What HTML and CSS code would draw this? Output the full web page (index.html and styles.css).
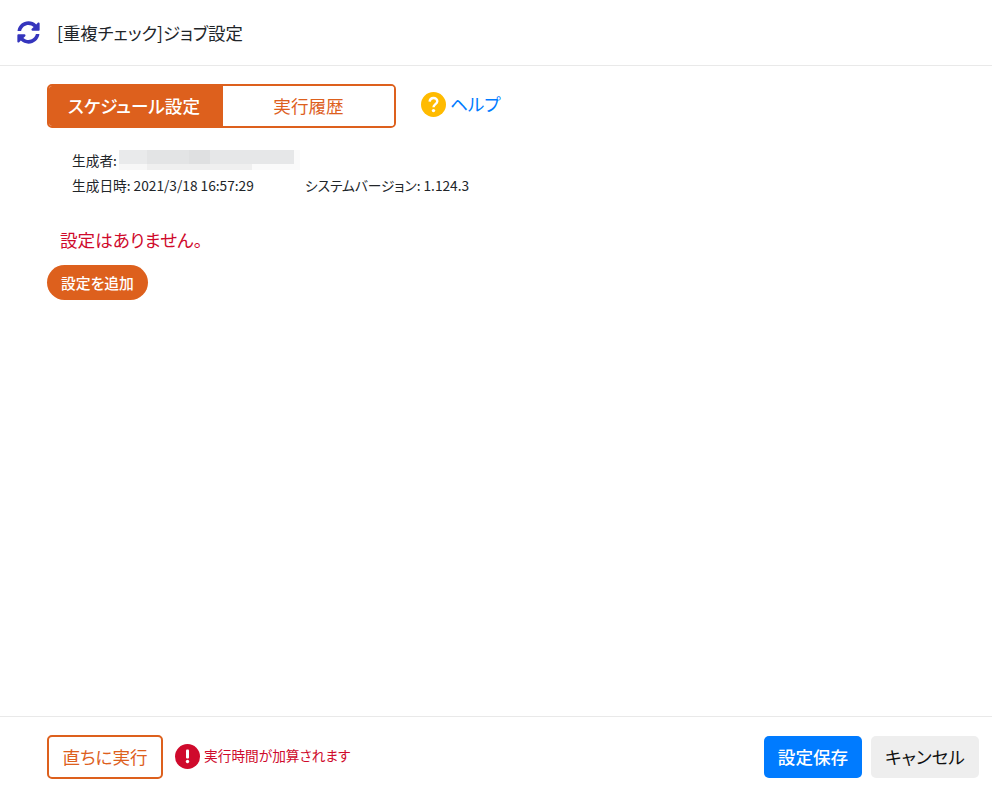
FILE: index.html
```html
<!DOCTYPE html>
<html lang="ja">
<head>
  <meta charset="UTF-8">
  <meta name="viewport" content="width=device-width, initial-scale=1.0">
  <title>[重複チェック]ジョブ設定</title>
  <link rel="stylesheet" href="styles.css">
</head>
<body>

  <header class="title-bar">
    <svg class="title-icon" viewBox="0 0 512 512"><path d="M370.72 133.28C339.458 104.008 298.888 87.962 255.848 88c-77.458.068-144.328 53.178-162.791 126.85-1.344 5.363-6.122 9.15-11.651 9.15H24.103c-7.498 0-13.194-6.807-11.807-14.176C33.933 94.924 134.813 8 256 8c66.448 0 126.791 26.136 171.315 68.685L463.03 40.97C478.149 25.851 504 36.559 504 57.941V192c0 13.255-10.745 24-24 24H345.941c-21.382 0-32.09-25.851-16.971-40.971l41.75-41.749zM32 296h134.059c21.382 0 32.09 25.851 16.971 40.971l-41.75 41.75c31.262 29.273 71.835 45.319 114.876 45.28 77.418-.07 144.315-53.144 162.787-126.849 1.344-5.363 6.122-9.15 11.651-9.15h57.304c7.498 0 13.194 6.807 11.807 14.176C478.067 417.076 377.187 504 256 504c-66.448 0-126.791-26.136-171.315-68.685L48.97 471.03C33.851 486.149 8 475.441 8 454.059V320c0-13.255 10.745-24 24-24z"/></svg>
    <h1>[重複チェック]ジョブ設定</h1>
  </header>

  <main class="content">
    <div class="tab-row">
      <div class="tabs">
        <button class="tab tab-active">スケジュール設定</button>
        <button class="tab">実行履歴</button>
      </div>
      <a class="help" href="#">
        <svg class="help-icon" viewBox="0 0 25 25">
          <circle cx="12.5" cy="12.5" r="12.5" fill="#ffbb00"/>
          <path d="M8.6 9.6c.2-2.2 1.8-3.6 3.9-3.6 2.2 0 3.8 1.4 3.8 3.2 0 2.8-3.8 3-3.8 6" fill="none" stroke="white" stroke-width="2.4"/>
          <circle cx="12.5" cy="18.6" r="1.7" fill="white"/>
        </svg>
        <span class="help-label">ヘルプ</span>
      </a>
    </div>

    <div class="info">
      <div class="info-row">
        <span>生成者:</span>
        <div class="blur-name">
          <div class="blur-top"></div>
          <div class="blur-bottom"></div>
        </div>
      </div>
      <div class="info-row">
        <span class="info-date">生成日時: 2021/3/18 16:57:29</span>
        <span>システムバージョン: 1.124.3</span>
      </div>
    </div>

    <p class="no-settings">設定はありません。</p>
    <button class="add-btn">設定を追加</button>
  </main>

  <footer class="bottom-bar">
    <button class="run-btn">直ちに実行</button>
    <svg class="warn-icon" viewBox="0 0 25 25">
      <circle cx="12.5" cy="12.5" r="12.5" fill="#cf0a2c"/>
      <rect x="11" y="5.5" width="3" height="9" rx="1" fill="white"/>
      <circle cx="12.5" cy="17.5" r="1.7" fill="white"/>
    </svg>
    <span class="warn-text">実行時間が加算されます</span>
    <button class="save-btn">設定保存</button>
    <button class="cancel-btn">キャンセル</button>
  </footer>

</body>
</html>
```

FILE: styles.css
```css
html, body {
  height: 100%;
}

body {
  font-family: 'Noto Sans CJK JP', 'Noto Sans', sans-serif;
  font-feature-settings: 'palt';
  margin: 0;
  display: flex;
  flex-direction: column;
  background-color: white;
  color: #212529;
}

button {
  font-family: inherit;
  font-feature-settings: inherit;
  cursor: pointer;
  padding: 0;
}

.title-bar {
  display: flex;
  align-items: center;
  height: 65px;
  padding-left: 17px;
  border-bottom: 1px solid #e9e9e9;
}

.title-icon {
  width: 23px;
  height: 23px;
  fill: #3535bd;
  margin-right: 17px;
  margin-top: -1px;
}

h1 {
  font-size: 17.4px;
  font-weight: 400;
  margin: 0;
}

.content {
  flex: 1;
  padding: 18px 47px 0;
}

.tab-row {
  display: flex;
  align-items: center;
}

.tabs {
  display: flex;
  width: 349px;
  height: 44px;
  border: 2px solid #dd601d;
  border-radius: 5px;
  box-sizing: border-box;
  overflow: hidden;
}

.tab {
  flex: 1;
  border: none;
  padding-bottom: 2px;
  background-color: white;
  color: #dd601d;
  font-size: 17.6px;
}

.tab-active {
  flex: 0 0 174px;
  padding-right: 4px;
  background-color: #dd601d;
  color: white;
  font-weight: 500;
}

.help {
  display: flex;
  align-items: center;
  margin-left: 25px;
  font-size: 17.6px;
  color: #007bff;
  text-decoration: none;
  gap: 4px;
  position: relative;
  top: -2px;
}

.help-icon {
  width: 25px;
  height: 25px;
}

.help-label {
  margin-top: -2px;
}

.info {
  padding: 19px 0 0 25px;
  font-size: 13.7px;
}

.info-row {
  display: flex;
  align-items: center;
  height: 25px;
}

.info-date {
  width: 233px;
}

.blur-name {
  width: 181px;
  height: 20px;
  margin-left: 2px;
  background-color: #fafafa;
}

.blur-top {
  width: 175px;
  height: 14px;
  background: linear-gradient(90deg, #e9eaeb 0 28px, #e3e4e5 28px 70px, #dfe0e1 70px 91px, #e6e7e8 91px 175px);
}

.blur-bottom {
  width: 133px;
  height: 6px;
  background: linear-gradient(90deg, #f7f7f7 0 28px, #efefef 28px 133px);
}

.no-settings {
  margin: 31px 0 0 13px;
  font-size: 17.6px;
  line-height: 24px;
  color: #cf0a2c;
}

.add-btn {
  display: block;
  margin-top: 13px;
  width: 101px;
  height: 35px;
  border: none;
  border-radius: 18px;
  background-color: #dd601d;
  color: white;
  font-size: 14.8px;
  font-weight: 500;
}

.bottom-bar {
  display: flex;
  align-items: center;
  height: 71px;
  padding: 4px 13px 0 47px;
  border-top: 1px solid #e9e9e9;
}

.run-btn {
  width: 116px;
  height: 44px;
  border: 2px solid #dd601d;
  border-radius: 5px;
  background-color: white;
  color: #dd601d;
  font-size: 17.6px;
}

.warn-icon {
  width: 25px;
  height: 25px;
  margin-left: 12px;
  margin-right: 4px;
}

.warn-text {
  flex: 1;
  margin-top: -3px;
  font-size: 13.7px;
  color: #cf0a2c;
}

.save-btn {
  width: 98px;
  height: 42px;
  border: none;
  border-radius: 5px;
  background-color: #007bff;
  color: white;
  font-size: 17.6px;
  font-weight: 500;
}

.cancel-btn {
  width: 108px;
  height: 42px;
  margin-left: 9px;
  border: none;
  border-radius: 5px;
  background-color: #eeeeee;
  color: #111;
  font-size: 17.6px;
}
```
